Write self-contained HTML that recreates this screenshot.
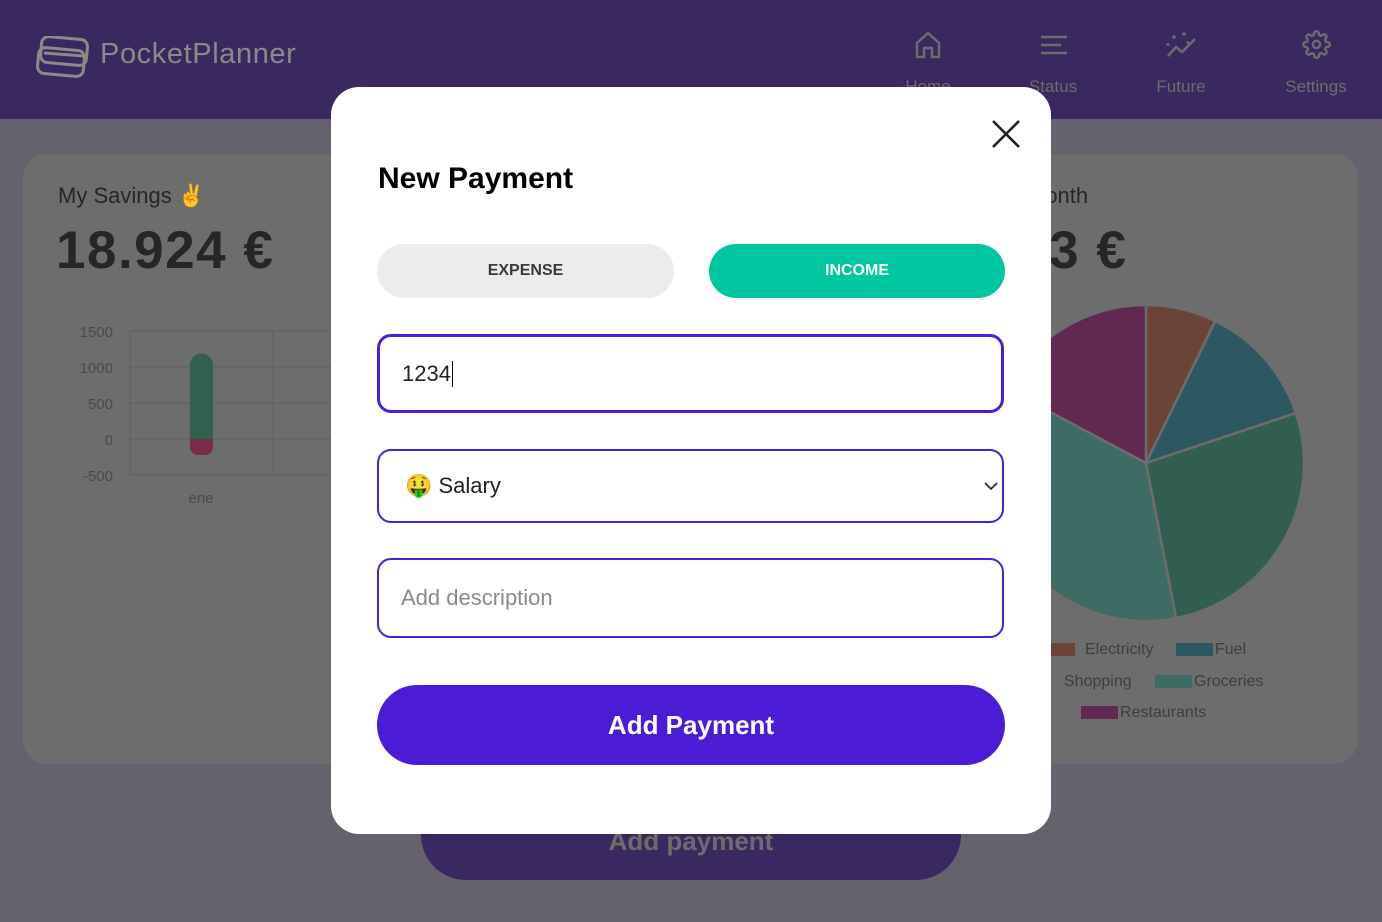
<!DOCTYPE html>
<html><head><meta charset="utf-8"><style>
*{box-sizing:border-box;margin:0;padding:0}
body{width:1382px;height:922px;overflow:hidden;background:#65616d;font-family:"Liberation Sans",Arial,sans-serif;position:relative}
.hdr{position:absolute;left:0;top:0;width:1382px;height:119px;background:#3a2960}
.logo{position:absolute;left:100px;top:38px;font-size:29px;color:#8a8a8a;letter-spacing:0.6px}
.nav{position:absolute;top:77px;font-size:17px;color:#6c6c6c;text-align:center;width:100px}
.card{position:absolute;top:154px;height:610px;background:#6d6d6d;border-radius:24px}
.t{position:absolute;color:#262626}
.big{font-size:53px;font-weight:bold;letter-spacing:1.5px}
.modal{position:absolute;left:331px;top:87px;width:720px;height:747px;background:#fff;border-radius:28px}
.pill{position:absolute;top:157px;height:54px;border-radius:27px;font-size:16px;font-weight:bold;display:flex;align-items:center;justify-content:center}
.fld{position:absolute;left:46px;width:627px;border:2px solid #4c1fd6;border-radius:14px;font-size:22px;padding-left:22px;display:flex;align-items:center}
.lg{position:absolute;font-size:16px;color:#3e3e3e}
.sw{position:absolute;width:37px;height:13px}
</style></head><body>
<div class="hdr">
<svg style="position:absolute;left:36px;top:36px" width="54" height="42" viewBox="0 0 54 42" fill="none" stroke="#8a8a8a" stroke-width="3"><rect x="5" y="2" width="46" height="26" rx="7" transform="rotate(5 28 15)"/><rect x="2" y="13" width="46" height="26" rx="7" transform="rotate(5 25 26)"/><path d="M8 17 L48 20"/></svg>
<div class="logo">PocketPlanner</div>
<svg style="position:absolute;left:915px;top:31px" width="26" height="28" viewBox="0 0 26 28" fill="none" stroke="#6c6c6c" stroke-width="2.5" stroke-linejoin="round"><path d="M2 12 L13 2 L24 12 V26 H17 V17 H9 V26 H2 Z"/></svg>
<svg style="position:absolute;left:1040px;top:35px" width="28" height="20" stroke="#6c6c6c" stroke-width="2.5"><path d="M1 2H27M1 10H21M1 18H27"/></svg>
<svg style="position:absolute;left:1165px;top:30px" width="32" height="28" fill="none" stroke="#6c6c6c" stroke-width="2.5"><path d="M3 26 L11 17 L17 22 L30 9"/><path d="M9 5v4M7 7h4M19 2v4M17 4h4M23 11v3M21.5 12.5h3M3 13v3M1.5 14.5h3" stroke-width="1.6"/></svg>
<svg style="position:absolute;left:1302px;top:30px" width="29" height="29" viewBox="0 0 24 24" fill="none" stroke="#6c6c6c" stroke-width="2"><circle cx="12" cy="12" r="3"/><path d="M19.4 15a1.65 1.65 0 0 0 .33 1.820l.06.06a2 2 0 1 1-2.830 2.830l-.06-.06a1.650 1.650 0 0 0-1.820-.330 1.650 1.650 0 0 0-1 1.510V21a2 2 0 1 1-4 0v-.09A1.650 1.650 0 0 0 9 19.4a1.650 1.650 0 0 0-1.820.33l-.06.06a2 2 0 1 1-2.830-2.830l.06-.06A1.650 1.650 0 0 0 4.680 15a1.650 1.650 0 0 0-1.510-1H3a2 2 0 1 1 0-4h.09A1.650 1.650 0 0 0 4.6 9a1.650 1.650 0 0 0-.33-1.820l-.06-.06a2 2 0 1 1 2.830-2.830l.06.06A1.650 1.650 0 0 0 9 4.680a1.650 1.650 0 0 0 1-1.510V3a2 2 0 1 1 4 0v.09a1.650 1.650 0 0 0 1 1.510 1.650 1.650 0 0 0 1.820-.33l.06-.06a2 2 0 1 1 2.830 2.830l-.06.06A1.650 1.650 0 0 0 19.4 9a1.650 1.650 0 0 0 1.510 1H21a2 2 0 1 1 0 4h-.09a1.650 1.650 0 0 0-1.510 1z"/></svg>
<div class="nav" style="left:878px">Home</div>
<div class="nav" style="left:1003px">Status</div>
<div class="nav" style="left:1131px">Future</div>
<div class="nav" style="left:1266px">Settings</div>
</div>

<div class="card" style="left:23px;width:660px"></div>
<div class="card" style="left:700px;width:658px"></div>
<div class="t" style="left:58px;top:183px;font-size:22px">My Savings ✌</div>
<div class="t big" style="left:56px;top:220px">18.924 €</div>
<svg style="position:absolute;left:0;top:310px" width="340" height="210">
<g stroke="#5f5f5f" stroke-width="1"><path d="M130 21H340M130 57H340M130 93H340M130 129H340M130 165H340M130 21V165M273 21V165"/></g>
<g font-size="15" fill="#4a4a4a" text-anchor="end" font-family="Liberation Sans"><text x="113" y="27">1500</text><text x="113" y="63">1000</text><text x="113" y="99">500</text><text x="113" y="135">0</text><text x="113" y="171">-500</text><text x="201" y="193" text-anchor="middle">ene</text></g>
<path d="M190 129V55a11.5 11.5 0 0 1 23 0V129Z" fill="#31604f"/>
<path d="M190 129H213V137a8 8 0 0 1-8 8H198a8 8 0 0 1-8-8Z" fill="#7a2b49"/>
</svg>
<div class="t" style="left:1027px;top:183px;font-size:22px">Month</div>
<div class="t big" style="left:940px;top:220px">1.093 €</div>
<svg style="position:absolute;left:0;top:0" width="1382" height="922">
<g stroke="#6d6d6d" stroke-width="2.5">
<path d="M1146 463L1146 305A158 158 0 0 1 1215.3 321Z" fill="#6b4438"/>
<path d="M1146 463L1215.3 321A158 158 0 0 1 1295.9 413.1Z" fill="#2d5862"/>
<path d="M1146 463L1295.9 413.1A158 158 0 0 1 1176.1 618.1Z" fill="#315e50"/>
<path d="M1146 463L1176.1 618.1A158 158 0 0 1 1006.5 388.8Z" fill="#3e6b63"/>
<path d="M1146 463L1006.5 388.8A158 158 0 0 1 1146 305Z" fill="#612851"/>
</g></svg>
<div class="sw" style="left:1038px;top:643px;background:#6b4438"></div><div class="lg" style="left:1085px;top:641px">Electricity</div>
<div class="sw" style="left:1176px;top:643px;background:#2d5862"></div><div class="lg" style="left:1215px;top:641px">Fuel</div>
<div class="sw" style="left:1010px;top:675px;background:#315e50"></div><div class="lg" style="left:1064px;top:673px">Shopping</div>
<div class="sw" style="left:1155px;top:675px;background:#3e6b63"></div><div class="lg" style="left:1194px;top:673px">Groceries</div>
<div class="sw" style="left:1081px;top:706px;background:#612851"></div><div class="lg" style="left:1120px;top:704px">Restaurants</div>

<div style="position:absolute;left:421px;top:790px;width:540px;height:90px;border-radius:0 0 45px 45px;background:#3a2960;color:#6c6c6c;font-size:26px;font-weight:bold;text-align:center;padding-top:36px">Add payment</div>

<div class="modal">
<svg style="position:absolute;left:660px;top:32px" width="30" height="30" stroke="#222" stroke-width="2.6"><path d="M2 2L28 28M28 2L2 28"/></svg>
<div style="position:absolute;left:47px;top:75px;font-size:30px;font-weight:bold;color:#000">New Payment</div>
<div class="pill" style="left:46px;width:297px;background:#ececec;color:#3a3a3a">EXPENSE</div>
<div class="pill" style="left:378px;width:296px;background:#00c7a0;color:#fff">INCOME</div>
<div class="fld" style="top:247px;height:79px;border-width:3px;color:#222">1234<span style="display:inline-block;width:1.5px;height:26px;background:#000;margin-left:1px"></span></div>
<div class="fld" style="top:362px;height:74px;color:#222;padding-left:26px">🤑 Salary<svg style="position:absolute;right:4px;top:30px" width="14" height="10" fill="none" stroke="#222" stroke-width="1.6"><path d="M1 2L7 8L13 2"/></svg></div>
<div class="fld" style="top:471px;height:80px;color:#8a8a8a">Add description</div>
<div style="position:absolute;left:46px;top:598px;width:628px;height:80px;border-radius:40px;background:#4c1cd4;color:#fff;font-size:26px;font-weight:bold;display:flex;align-items:center;justify-content:center">Add Payment</div>
</div>
</body></html>
